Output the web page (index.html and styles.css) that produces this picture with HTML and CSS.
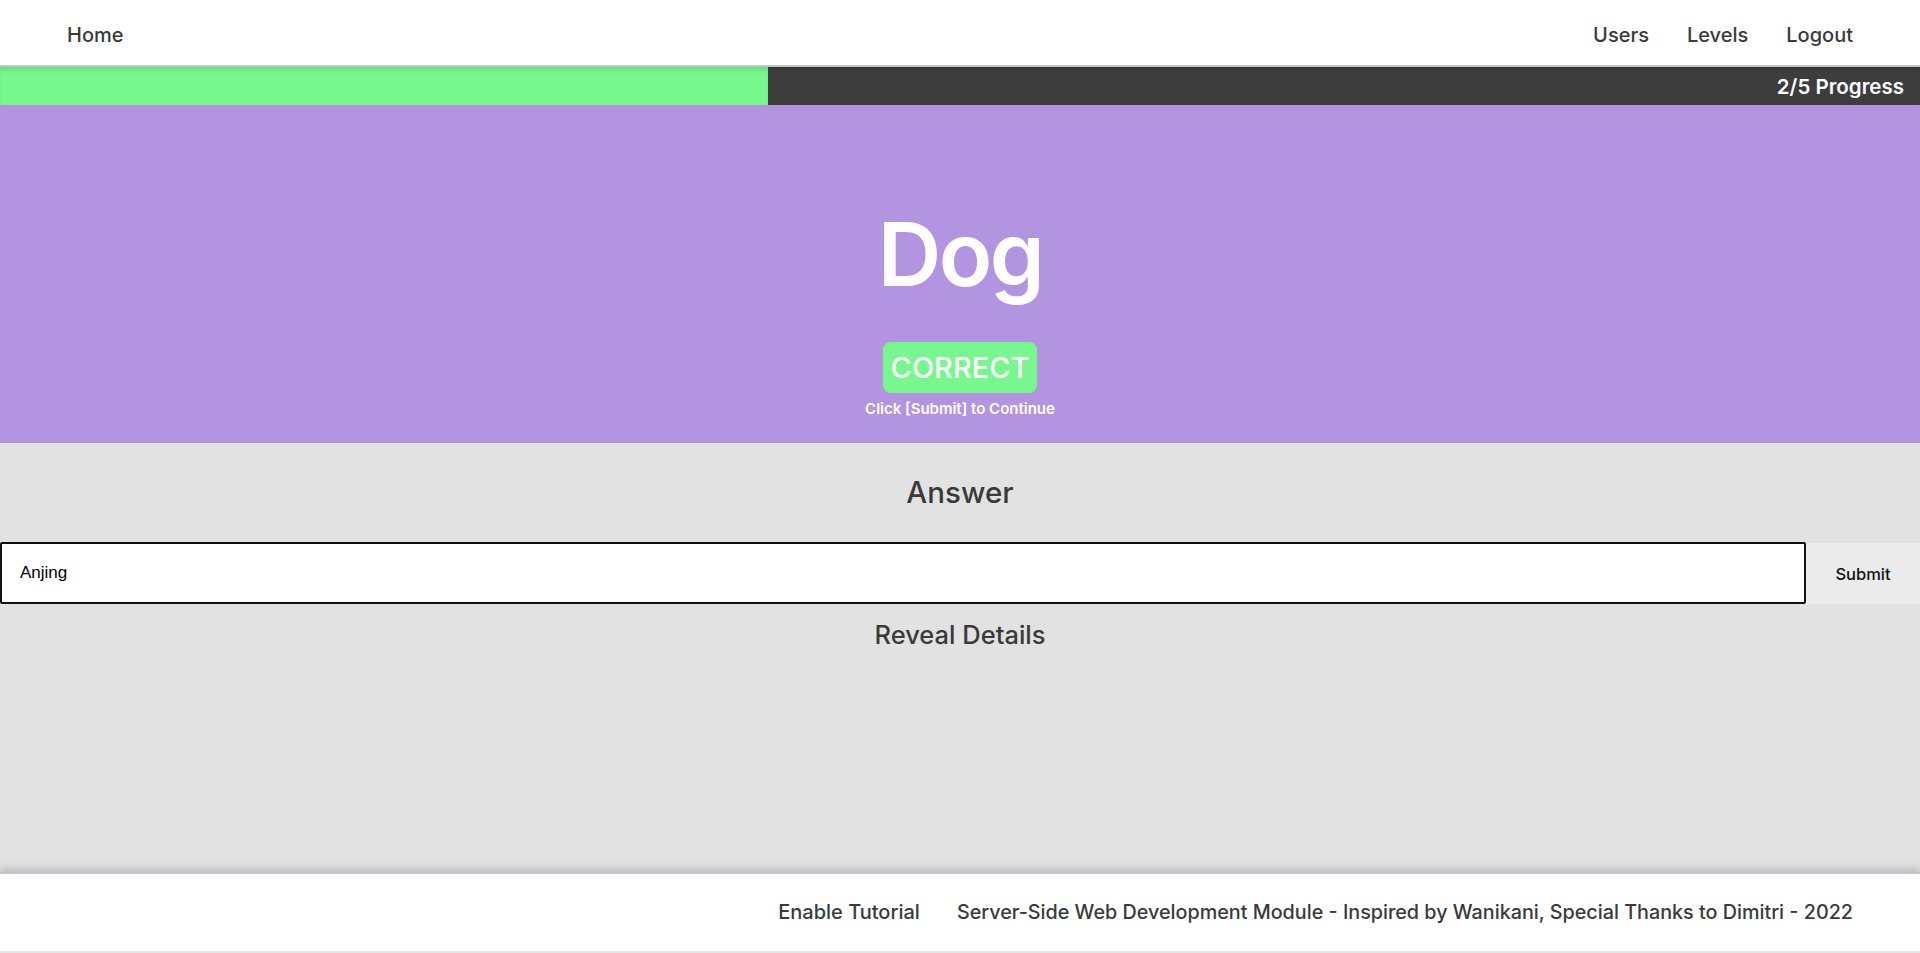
FILE: index.html
```html
<!DOCTYPE html>
<html lang="en">
<head>
<meta charset="utf-8">
<title>Review</title>
<link rel="stylesheet" href="styles.css">
</head>
<body>
<div class="page">
  <header class="nav">
    <a class="nav-link" href="#">Home</a>
    <nav class="nav-right">
      <a class="nav-link" href="#">Users</a>
      <a class="nav-link" href="#">Levels</a>
      <a class="nav-link" href="#">Logout</a>
    </nav>
  </header>
  <div class="progress">
    <div class="progress-fill" style="width: 40%"></div>
    <span class="progress-label">2/5 Progress</span>
  </div>
  <section class="hero">
    <h1 class="word">Dog</h1>
    <div class="badge">CORRECT</div>
    <p class="hint">Click [Submit] to Continue</p>
  </section>
  <main class="answer">
    <h2 class="answer-title">Answer</h2>
    <form class="answer-form">
      <input class="answer-input" type="text" value="Anjing" autofocus>
      <button class="submit-btn" type="button">Submit</button>
    </form>
    <h3 class="reveal">Reveal Details</h3>
  </main>
  <footer class="footer">
    <a class="footer-link" href="#">Enable Tutorial</a>
    <span class="footer-text">Server-Side Web Development Module - Inspired by Wanikani, Special Thanks to Dimitri - 2022</span>
  </footer>
</div>
</body>
</html>
```
FILE: styles.css
```css
* { box-sizing: border-box; }
html, body { margin: 0; padding: 0; }
body {
  font-family: Inter, "Noto Sans", sans-serif;
  color: #3d3d3d;
  background: #fff;
}
.page {
  display: flex;
  flex-direction: column;
  min-height: 100vh;
}
a { text-decoration: none; color: inherit; }

.nav {
  height: 67px;
  display: flex;
  align-items: center;
  justify-content: space-between;
  padding: 4px 67px 0;
  border-bottom: 2px solid #c6c4c6;
  background: #fff;
}
.nav-right { display: flex; gap: 38px; }
.nav-link {
  font-size: 20px;
  font-weight: 500;
  color: #3a3a3a;
}

.progress {
  height: 38px;
  display: flex;
  align-items: center;
  background: #3e3d3e;
  box-shadow: inset 0 4px 5px -3px rgba(0,0,0,0.25);
}
.progress-fill {
  align-self: stretch;
  background: #79f78f;
  box-shadow: inset 0 5px 6px -3px rgba(0,0,0,0.15);
}
.progress-label {
  margin-left: auto;
  padding-right: 16px;
  color: #fff;
  font-size: 20.5px;
  font-weight: 600;
}

.hero {
  height: 338px;
  background: #b294e0;
  display: flex;
  flex-direction: column;
  align-items: center;
  color: #fff;
  padding-top: 105px;
}
.word {
  margin: 0;
  font-size: 88px;
  font-weight: 600;
  line-height: 1;
  letter-spacing: -2.5px;
}
.badge {
  margin-top: 44px;
  background: #79f78f;
  border-radius: 8px;
  width: 154px;
  height: 51px;
  display: flex;
  align-items: center;
  justify-content: center;
  font-size: 29px;
  font-weight: 500;
}
.hint {
  margin: 6px 0 0;
  font-size: 15px;
  font-weight: 600;
}

.answer {
  flex: 1;
  background: #e2e2e2;
  display: flex;
  flex-direction: column;
  align-items: center;
}
.answer-title {
  margin: 32px 0 0;
  font-size: 29.5px;
  font-weight: 500;
  line-height: 34px;
  color: #3a3a3a;
}
.answer-form {
  margin-top: 33px;
  display: flex;
  width: 100%;
  height: 62px;
}
.answer-input {
  flex: 1;
  height: 62px;
  border: 2px solid #111;
  border-radius: 2px;
  padding: 0 0 0 18px;
  font-family: "Liberation Sans", Arial, sans-serif;
  font-size: 17px;
  color: #000;
  background: #fff;
  outline: none;
}
.submit-btn {
  width: 114px;
  height: 61px;
  margin-top: 1px;
  border: none;
  background: #ebebeb;
  font-family: Inter, "Noto Sans", sans-serif;
  font-size: 16.5px;
  font-weight: 500;
  color: #111;
}
.reveal {
  margin: 16px 0 0;
  font-size: 25.5px;
  font-weight: 500;
  line-height: 30px;
  color: #3a3a3a;
}

.footer {
  height: 81px;
  background: #fff;
  display: flex;
  align-items: center;
  justify-content: flex-end;
  gap: 37px;
  padding: 0 67px 2px;
  border-bottom: 2px solid #e6e6e6;
  box-shadow: 0 -4px 8px rgba(90, 80, 100, 0.25);
  border-top: 2px solid #cbc4cc;
  position: relative;
}
.footer-link {
  font-size: 20px;
  font-weight: 500;
  color: #3a3a3a;
}
.footer-text {
  font-size: 19.75px;
  font-weight: 500;
  color: #3a3a3a;
}
```
